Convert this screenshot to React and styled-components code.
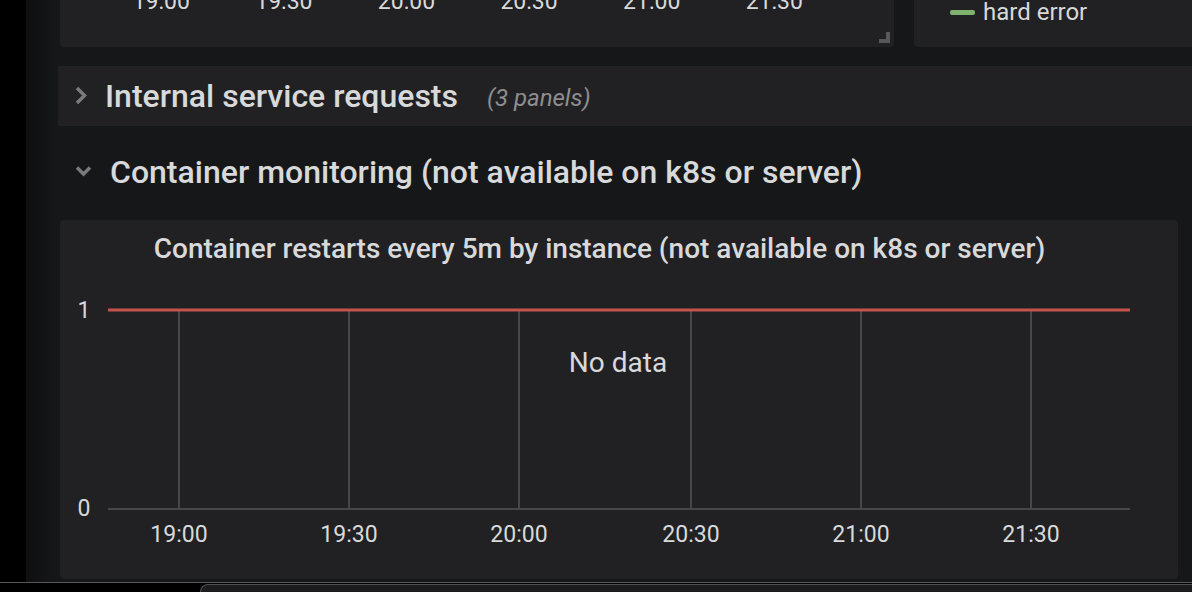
import styled, { createGlobalStyle } from 'styled-components';

const GlobalStyle = createGlobalStyle`
  html, body {
    margin: 0;
    padding: 0;
    background: #000;
  }
  body {
    font-family: Roboto, 'Liberation Sans', sans-serif;
    color: #d8d9da;
  }
  * {
    box-sizing: border-box;
  }
`;

const Page = styled.div`
  width: 1192px;
  height: 592px;
  display: flex;
  flex-direction: column;
  overflow: hidden;
  background: #000;
`;

const Main = styled.div`
  display: flex;
  height: 582px;
  flex-shrink: 0;
`;

const Gutter = styled.div`
  width: 26px;
  flex-shrink: 0;
  background: #000;
`;

const Dashboard = styled.div`
  flex: 1;
  overflow: hidden;
  background: linear-gradient(90deg, #0f0f10 0, #161719 32px);
`;

// the dashboard is scrolled down a little, so the first panels are cut off
const ScrollContent = styled.div`
  margin-top: -53px;
  padding-left: 32px;
  display: flex;
  flex-direction: column;
`;

const TopRow = styled.div`
  display: flex;
  gap: 20px;
  padding-left: 2px;
  height: 100px;
`;

const TopPanel = styled.div`
  position: relative;
  width: 834px;
  flex-shrink: 0;
  display: flex;
  align-items: flex-start;
  padding: 44px 0 0 40px;
  background: #212124;
  border-radius: 4px;
`;

const TimeLabel = styled.div`
  width: 122.6px;
  text-align: center;
  font-size: 23px;
  line-height: 22px;
`;

const ResizeHandle = styled.svg`
  position: absolute;
  right: 4px;
  bottom: 4px;
`;

const LegendPanel = styled.div`
  width: 420px;
  flex-shrink: 0;
  padding: 54px 0 0 36px;
  background: #212124;
  border-radius: 4px;
`;

const LegendItem = styled.div`
  display: flex;
  align-items: center;
  gap: 8px;
  font-size: 24px;
  line-height: 22px;
`;

const LegendSwatch = styled.span`
  width: 25px;
  height: 5px;
  border-radius: 2px;
  background: ${(p) => p.color};
`;

const RowHeader = styled.div`
  height: 60px;
  display: flex;
  align-items: center;
  padding-left: 15px;
  margin-top: ${(p) => p.gap}px;
  background: ${(p) => (p.collapsed ? '#212124' : 'transparent')};
`;

const RowTitle = styled.span`
  margin-left: ${(p) => (p.open ? 17 : 12)}px;
  font-size: 32px;
  font-weight: 500;
  color: #d8d9da;
`;

const RowCount = styled.span`
  margin-left: 29px;
  padding-top: 4px;
  font-size: 24px;
  font-style: italic;
  color: #8e8e90;
`;

const Panel = styled.div`
  width: 1118px;
  height: 359px;
  margin: 18px 0 0 2px;
  display: flex;
  flex-direction: column;
  background: #212124;
  border-radius: 4px;
`;

const PanelTitle = styled.div`
  height: 56px;
  display: flex;
  align-items: center;
  justify-content: center;
  padding-right: 39px;
  font-size: 28px;
  font-weight: 500;
  color: #d8d9da;
  white-space: nowrap;
`;

const BottomBar = styled.div`
  height: 10px;
  display: flex;
  padding: 1px 0 0 200px;
  border-top: 1px solid #58585a;
  background: #000;
`;

const Tray = styled.div`
  flex: 1;
  border-top: 1px solid #505052;
  border-left: 1px solid #505052;
  border-radius: 9px 0 0 0;
  background: #1c1c1e;
`;

function Chevron({ open }) {
  return (
    <svg width='20' height='20' viewBox='0 0 20 20'>
      <polyline
        points={open ? '4,5.5 10.5,12 17,5.5' : '4,2 11.5,9.5 4,17'}
        fill='none'
        stroke='#7b7b7d'
        strokeWidth='3.4'
      />
    </svg>
  );
}

const topTimes = ['19:00', '19:30', '20:00', '20:30', '21:00', '21:30'];
const gridX = [119, 289, 459, 631, 801, 971];

function RestartsChart() {
  const text = { fontFamily: 'Roboto, sans-serif', fontSize: 23, fill: '#d8d9da' };
  return (
    <svg width='1118' height='303' viewBox='0 0 1118 303'>
      {gridX.map((x) => (
        <line key={x} x1={x} y1={35} x2={x} y2={232} stroke='#48484b' strokeWidth='2' />
      ))}
      <line x1={48} y1={233} x2={1070} y2={233} stroke='#48484b' strokeWidth='2' />
      <line x1={48} y1={34} x2={1070} y2={34} stroke='#c4544b' strokeWidth='3' />
      <text x={24} y={34} textAnchor='middle' dominantBaseline='central' {...text}>1</text>
      <text x={24} y={232} textAnchor='middle' dominantBaseline='central' {...text}>0</text>
      {gridX.map((x, i) => (
        <text key={x} x={x} y={258} textAnchor='middle' dominantBaseline='central' {...text}>
          {topTimes[i]}
        </text>
      ))}
      <text x={558} y={86} textAnchor='middle' dominantBaseline='central' {...text} fontSize={28}>
        No data
      </text>
    </svg>
  );
}

export default function App() {
  return (
    <Page>
      <GlobalStyle />
      <Main>
        <Gutter />
        <Dashboard>
          <ScrollContent>
            <TopRow>
              <TopPanel>
                {topTimes.map((t) => (
                  <TimeLabel key={t}>{t}</TimeLabel>
                ))}
                <ResizeHandle width='11' height='11' viewBox='0 0 11 11'>
                  <path d='M7 0H11V11H0V7H7Z' fill='#58585b' />
                </ResizeHandle>
              </TopPanel>
              <LegendPanel>
                <LegendItem>
                  <LegendSwatch color='#7eb26d' />
                  hard error
                </LegendItem>
              </LegendPanel>
            </TopRow>
            <RowHeader collapsed gap={19}>
              <Chevron />
              <RowTitle>Internal service requests</RowTitle>
              <RowCount>(3 panels)</RowCount>
            </RowHeader>
            <RowHeader gap={16}>
              <Chevron open />
              <RowTitle open>Container monitoring (not available on k8s or server)</RowTitle>
            </RowHeader>
            <Panel>
              <PanelTitle>
                Container restarts every 5m by instance (not available on k8s or server)
              </PanelTitle>
              <RestartsChart />
            </Panel>
          </ScrollContent>
        </Dashboard>
      </Main>
      <BottomBar>
        <Tray />
      </BottomBar>
    </Page>
  );
}
